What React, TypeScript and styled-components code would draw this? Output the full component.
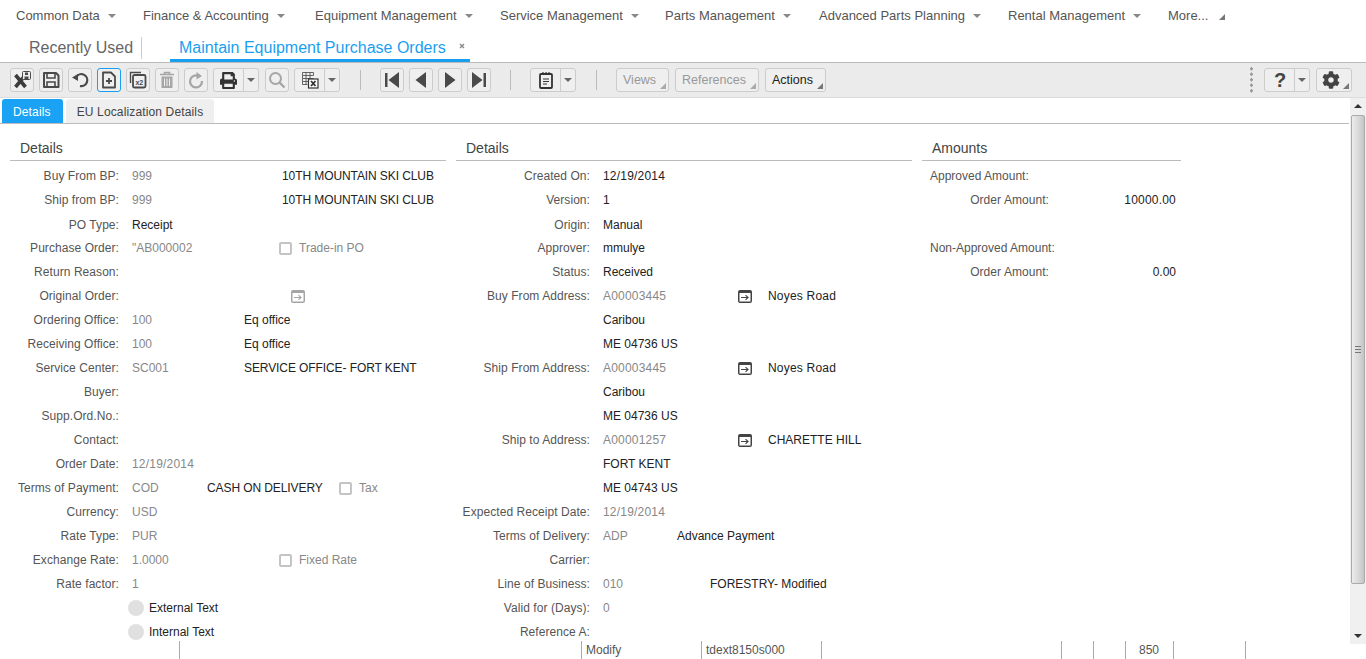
import React from "react";
import styled, { createGlobalStyle } from "styled-components";
import { FaCog, FaPrint } from "react-icons/fa";

const Global = createGlobalStyle`
  html, body { margin: 0; padding: 0; background: #fff; overflow: hidden; }
  body { font-family: "Liberation Sans", Arial, sans-serif; font-size: 12px; color: #333; }
  #root { width: 1366px; height: 659px; }
`;

const Page = styled.div`
  width: 1366px; height: 659px; display: flex; flex-direction: column; overflow: hidden;
`;
const MenuBar = styled.nav`
  height: 31px; display: flex; align-items: center; padding-left: 16px; color: #555; flex: none; font-size: 13px;
`;
const MenuItem = styled.div<{ $w: number }>`
  width: ${p => p.$w}px; display: flex; align-items: center; gap: 8px; white-space: nowrap; flex: none;
`;
const Caret = styled.span`
  width: 0; height: 0; border-left: 4px solid transparent; border-right: 4px solid transparent;
  border-top: 4px solid #888; margin-top: 1px;
`;
const CornerMark = styled.svg`
  display: block; flex: none;
`;
const MoreMark = styled(CornerMark)`
  margin: 2px 0 0 3px;
`;
const TabStrip = styled.div`
  height: 31px; display: flex; padding-left: 29px; flex: none;
`;
const Recent = styled.div`
  width: 112px; height: 22px; margin-top: 6px; border-right: 1px solid #ccc;
  font-size: 16px; line-height: 21px; color: #666;
`;
const OpenTab = styled.div`
  margin-left: 28px; width: 300px; height: 31px; box-sizing: border-box; border-bottom: 3px solid #1a9ff0;
  padding: 7px 0 0 9px; font-size: 16px; line-height: 19px; color: #1a9ff0; display: flex; gap: 13px; white-space: nowrap;
`;
const CloseMark = styled.svg`
  margin-top: 5px; flex: none;
`;
const Toolbar = styled.div`
  height: 36px; box-sizing: border-box; background: #ebebeb; border-top: 1px solid #bbb; border-bottom: 1px solid #ddd;
  display: flex; align-items: center; padding: 0 14px 0 10px; flex: none;
`;
const Btn = styled.div<{ $focus?: boolean; $gap?: number }>`
  width: 24px; height: 24px; box-sizing: border-box; flex: none; margin-left: ${p => p.$gap ?? 5}px;
  border: 1px solid ${p => (p.$focus ? "#1a9ff0" : "#ccc")}; border-radius: 3px;
  display: flex; align-items: center; justify-content: center; background: #efefef;
  &:first-child { margin-left: 0; }
`;
const Split = styled.div<{ $gap?: number }>`
  height: 24px; box-sizing: border-box; flex: none; margin-left: ${p => p.$gap ?? 5}px;
  border: 1px solid #ccc; border-radius: 3px; display: grid; grid-template-columns: 30px 14px; background: #efefef;
`;
const SplitMain = styled.div`
  display: flex; align-items: center; justify-content: center; border-right: 1px solid #ccc;
`;
const SplitDrop = styled.div`
  display: flex; align-items: center; justify-content: center;
`;
const SmallCaret = styled.span`
  width: 0; height: 0; border-left: 4px solid transparent; border-right: 4px solid transparent; border-top: 4px solid #666;
`;
const Sep = styled.div<{ $l: number; $r: number }>`
  width: 1px; height: 20px; background: #bbb; flex: none; margin: 0 ${p => p.$r}px 0 ${p => p.$l}px;
`;
const TextBtn = styled.div<{ $w: number; $off?: boolean; $gap?: number }>`
  width: ${p => p.$w}px; height: 24px; box-sizing: border-box; margin-left: ${p => p.$gap ?? 6}px; flex: none; position: relative;
  border: 1px solid #ccc; border-radius: 3px; background: #efefef; padding-left: 6px; line-height: 23px; font-size: 12.5px;
  color: ${p => (p.$off ? "#999" : "#222")};
`;
const GearBtn = styled.div`
  width: 36px; height: 24px; box-sizing: border-box; margin-left: 6px; flex: none; position: relative;
  border: 1px solid #ccc; border-radius: 3px; background: #efefef; padding: 2px 0 0 5px;
`;
const BtnCorner = styled(CornerMark)`
  position: absolute; right: 2px; bottom: 2px;
`;
const Grip = styled.div`
  margin-left: auto; margin-right: 11px; width: 3px; height: 28px; flex: none;
  background-image: radial-gradient(circle, #999 1.4px, transparent 1.6px); background-size: 3px 5.5px;
`;
const Body = styled.div`
  height: 542px; display: grid; grid-template-columns: 1350px 16px; flex: none;
`;
const Main = styled.div`
  min-width: 0; display: flex; flex-direction: column;
`;
const TabsRow = styled.div`
  height: 26px; margin-right: 1px; display: flex; box-sizing: border-box; border-bottom: 1px solid #bbb; padding-left: 2px; gap: 3px; flex: none;
`;
const SubTab = styled.div<{ $on?: boolean }>`
  height: 24px; margin-top: 1px; box-sizing: border-box; padding: 0 ${p => (p.$on ? 12 : 11)}px 0 11px; line-height: 26px; border-radius: 3px 3px 0 0; letter-spacing: .14px;
  background: ${p => (p.$on ? "#1aa3f5" : "#efefef")}; color: ${p => (p.$on ? "#fff" : "#444")};
`;
const Form = styled.div`
  flex: 1; overflow: hidden; display: flex; padding: 13px 0 0 10px; box-sizing: border-box; align-items: flex-start;
`;
const Section = styled.section<{ $w: number; $gap?: number }>`
  width: ${p => p.$w}px; flex: none; margin-left: ${p => p.$gap ?? 0}px;
`;
const SectionTitle = styled.h3`
  margin: 0 0 3px; height: 24px; box-sizing: border-box; border-bottom: 1px solid #bbb; padding-left: 10px;
  font-size: 14px; font-weight: 400; line-height: 22px; color: #444;
`;
const Row = styled.div<{ $nudge?: boolean }>`
  height: 24px; box-sizing: border-box; padding-top: ${p => (p.$nudge ? 2 : 0)}px; display: flex; align-items: center; white-space: nowrap;
`;
const Label = styled.div<{ $w: number }>`
  width: ${p => p.$w}px; text-align: right; color: #555; flex: none; margin-right: 13px; letter-spacing: .06px; white-space: nowrap;
`;
const Muted = styled.div<{ $w?: number; $wide?: boolean }>`
  width: ${p => (p.$w ? `${p.$w}px` : "auto")}; color: #888; flex: none;
  letter-spacing: ${p => (p.$wide ? ".2px" : "0")};
`;
const Val = styled.div<{ $w?: number; $tight?: boolean; $wide?: boolean; $after?: number }>`
  width: ${p => (p.$w ? `${p.$w}px` : "auto")}; color: #222; flex: none;
  margin-left: ${p => p.$after ?? 0}px;
  letter-spacing: ${p => (p.$tight ? "-.09px" : p.$wide ? ".2px" : "0")};
`;
const Check = styled.span`
  width: 13px; height: 13px; box-sizing: border-box; border: 2px solid #c4c4c4; border-radius: 2px; margin-right: 7px; flex: none;
`;
const Hint = styled.span`
  color: #888;
`;
const AmountHead = styled.div`
  height: 24px; line-height: 24px; padding-left: 8px; color: #555;
`;
const AmountRow = styled.div`
  height: 24px; display: flex; justify-content: space-between; align-items: center; padding: 0 5px 0 46px;
`;
const Dot = styled.span`
  width: 16px; height: 16px; border-radius: 50%; background: #e0e0e0; margin: 0 5px 0 118px; flex: none;
`;
const Scroll = styled.div`
  background: #f0f0f0; display: flex; flex-direction: column; align-items: center;
`;
const ArrowUp = styled.span`
  width: 0; height: 0; border-left: 4px solid transparent; border-right: 4px solid transparent; border-bottom: 4px solid #333; margin: 6px 0 7px;
`;
const ArrowDown = styled.span`
  width: 0; height: 0; border-left: 4px solid transparent; border-right: 4px solid transparent; border-top: 4px solid #333; margin: auto 0 6px;
`;
const Thumb = styled.div`
  width: 14px; height: 469px; box-sizing: border-box; border: 1px solid #aaa; border-radius: 2px; flex: none;
  background: linear-gradient(90deg, #ececec, #d6d6d6 60%, #c4c4c4); display: flex; align-items: center; justify-content: center;
`;
const ThumbGrip = styled.span`
  width: 6px; height: 5px; border-top: 1px solid #777; border-bottom: 1px solid #777; position: relative;
  &::after { content: ""; position: absolute; left: 0; right: 0; top: 2px; height: 1px; background: #777; }
`;
const Status = styled.footer`
  height: 18px; margin-top: 1px; display: flex; flex: none; padding-left: 179px; color: #555; line-height: 18px;
`;
const Cell = styled.div<{ $w: number; $pad?: number }>`
  width: ${p => p.$w}px; box-sizing: border-box; border-left: 1px solid #aaa; padding-left: ${p => p.$pad ?? 4}px; flex: none; white-space: nowrap;
`;
const HelpSvg = styled.svg`
  overflow: visible;
`;

const D = "#4a4a4a";
const Off = "#a6a6a6";

const ico = { width: 18, height: 18, viewBox: "0 0 18 18" };

const IconSaveExit = () => (
  <svg {...ico}>
    <path d="M2.5 4l10 12M12.5 4l-10 12" stroke="#3c3c3c" strokeWidth="3.6" fill="none" />
    <rect x="9.5" y="0.5" width="8" height="8" rx="1" fill="#efefef" stroke={D} />
    <rect x="12" y="1.5" width="3" height="2.5" fill={D} />
    <rect x="11.5" y="5.5" width="4" height="3" fill={D} />
  </svg>
);
const IconSave = () => (
  <svg {...ico}>
    <path d="M2 2h12l2.5 2.5V16H2z" fill="none" stroke={D} strokeWidth="2" strokeLinejoin="round" />
    <path d="M5 2v5h8V2M5 16v-5h8v5" fill="none" stroke={D} strokeWidth="1.6" />
  </svg>
);
const IconUndo = () => (
  <svg {...ico}>
    <path d="M5.5 5.5A6 6 0 1 1 9 15" fill="none" stroke={D} strokeWidth="2.2" />
    <path d="M1 6.5L7 3v7z" fill={D} />
  </svg>
);
const IconNew = () => (
  <svg {...ico}>
    <path d="M3 1.5h8l4 4v11H3z" fill="none" stroke={D} strokeWidth="1.8" strokeLinejoin="round" />
    <path d="M6 10h6M9 7v6" stroke={D} strokeWidth="1.8" />
  </svg>
);
const IconDup = () => (
  <svg {...ico}>
    <path d="M1.5 12V1.5H12" fill="none" stroke={D} strokeWidth="1.4" />
    <rect x="4" y="4" width="12.5" height="12.5" rx="1.5" fill="#efefef" stroke={D} strokeWidth="1.8" />
    <text x="6.4" y="14" fontSize="7" fontWeight="700" fontFamily="Liberation Sans" fill={D}>x2</text>
  </svg>
);
const IconTrash = () => (
  <svg {...ico}>
    <path d="M2 3.5h14M6.5 3.5V1.5h5v2" fill="none" stroke={Off} strokeWidth="1.6" />
    <path d="M3.5 5.5h11V17h-11z" fill={Off} />
    <path d="M6.5 7.5v7.5M9 7.5v7.5M11.5 7.5v7.5" stroke="#efefef" strokeWidth="1" />
  </svg>
);
const IconRedo = () => (
  <svg {...ico}>
    <path d="M11.5 5A6 6 0 1 0 15 10" fill="none" stroke={Off} strokeWidth="2.2" />
    <path d="M9.5 1v7.5L15 5z" fill={Off} />
  </svg>
);
const IconSearch = () => (
  <svg {...ico}>
    <circle cx="7.5" cy="7.5" r="5.5" fill="none" stroke={Off} strokeWidth="2" />
    <path d="M11.5 11.5l5 5" stroke={Off} strokeWidth="2.4" />
  </svg>
);
const IconExcel = () => (
  <svg {...ico}>
    <path d="M1.5 1.5h11v3h-11zM1.5 4.5v3h11M1.5 7.5v3h6M1.5 10.5v3h5M5 1.5v12M9 1.5v6" fill="none" stroke="#555" strokeWidth=".9" />
    <rect x="7.5" y="8" width="9.5" height="9" fill="#fff" stroke="#333" strokeWidth="1.2" />
    <path d="M10 10l4.5 5M14.5 10L10 15" stroke="#333" strokeWidth="1.8" />
  </svg>
);
const IconFirst = () => (
  <svg {...ico}><path d="M2 2h2.5v14H2zM16 1v16L5.5 9z" fill={D} /></svg>
);
const IconPrev = () => (
  <svg {...ico}><path d="M14 1v16L3.5 9z" fill={D} /></svg>
);
const IconNext = () => (
  <svg {...ico}><path d="M4 1v16L14.5 9z" fill={D} /></svg>
);
const IconLast = () => (
  <svg {...ico}><path d="M13.5 2H16v14h-2.5zM2 1v16L12.5 9z" fill={D} /></svg>
);
const IconNote = () => (
  <svg {...ico}>
    <rect x="3" y="3" width="12" height="14" rx="1" fill="none" stroke="#333" strokeWidth="1.8" />
    <path d="M6 1v3M9 1v3M12 1v3M6 8h6M6 10.5h6M6 13h4" stroke="#333" strokeWidth="1.2" />
  </svg>
);
const IconHelp = () => (
  <HelpSvg width="16" height="20" viewBox="0 0 16 20">
    <text x="8" y="17" textAnchor="middle" fontSize="20" fontWeight="700" fontFamily="Liberation Sans" fill="#444">?</text>
  </HelpSvg>
);
const Corner = ({ c = "#777" }: { c?: string }) => (
  <BtnCorner width="6" height="6" viewBox="0 0 6 6"><path d="M6 0v6H0z" fill={c} /></BtnCorner>
);
const Jump = ({ c = "#444", bar = "#fff" }: { c?: string; bar?: string }) => (
  <svg width="14" height="13" viewBox="0 0 14 13">
    <rect width="14" height="13" rx="2" fill={c} />
    <rect x="1.5" y="3" width="11" height="8.5" fill={bar} />
    <path d="M3 7.5h6.5M7.5 5.2l2.6 2.3-2.6 2.3" fill="none" stroke={c} strokeWidth="1.1" />
  </svg>
);
const JumpSlot = styled.span<{ $m: number }>`
  display: flex; margin-left: ${p => p.$m}px; flex: none;
`;

const menu: [string, number][] = [
  ["Common Data", 127], ["Finance & Accounting", 172], ["Equipment Management", 185],
  ["Service Management", 165], ["Parts Management", 154], ["Advanced Parts Planning", 189], ["Rental Management", 160],
];

const L1 = 109;
const L2 = 134;

function App() {
  return (
    <Page>
      <Global />
      <MenuBar>
        {menu.map(([t, w]) => (
          <MenuItem key={t} $w={w}>{t}<Caret /></MenuItem>
        ))}
        <MenuItem $w={70}>
          More...
          <MoreMark width="6" height="6" viewBox="0 0 6 6"><path d="M6 0v6H0z" fill="#777" /></MoreMark>
        </MenuItem>
      </MenuBar>
      <TabStrip>
        <Recent>Recently Used</Recent>
        <OpenTab>
          Maintain Equipment Purchase Orders
          <CloseMark width="6" height="6" viewBox="0 0 6 6"><path d="M1 1l4 4M5 1L1 5" stroke="#888" strokeWidth="1.4" /></CloseMark>
        </OpenTab>
      </TabStrip>
      <Toolbar>
        <Btn><IconSaveExit /></Btn>
        <Btn><IconSave /></Btn>
        <Btn><IconUndo /></Btn>
        <Btn $focus><IconNew /></Btn>
        <Btn><IconDup /></Btn>
        <Btn><IconTrash /></Btn>
        <Btn><IconRedo /></Btn>
        <Split><SplitMain><FaPrint size={17} color="#333" /></SplitMain><SplitDrop><SmallCaret /></SplitDrop></Split>
        <Btn $gap={6}><IconSearch /></Btn>
        <Split><SplitMain><IconExcel /></SplitMain><SplitDrop><SmallCaret /></SplitDrop></Split>
        <Sep $l={20} $r={19} />
        <Btn $gap={0}><IconFirst /></Btn>
        <Btn><IconPrev /></Btn>
        <Btn><IconNext /></Btn>
        <Btn><IconLast /></Btn>
        <Sep $l={19} $r={19} />
        <Split $gap={0}><SplitMain><IconNote /></SplitMain><SplitDrop><SmallCaret /></SplitDrop></Split>
        <Sep $l={20} $r={19} />
        <TextBtn $w={53} $off $gap={0}>Views<Corner c="#aaa" /></TextBtn>
        <TextBtn $w={84} $off>References<Corner c="#aaa" /></TextBtn>
        <TextBtn $w={61}>Actions<Corner /></TextBtn>
        <Grip />
        <Split $gap={0}><SplitMain><IconHelp /></SplitMain><SplitDrop><SmallCaret /></SplitDrop></Split>
        <GearBtn><FaCog size={18} color="#444" /><Corner /></GearBtn>
      </Toolbar>
      <Body>
        <Main>
          <TabsRow>
            <SubTab $on>Details</SubTab>
            <SubTab>EU Localization Details</SubTab>
          </TabsRow>
          <Form>
            <Section $w={436}>
              <SectionTitle>Details</SectionTitle>
              <Row><Label $w={L1}>Buy From BP:</Label><Muted $w={150}>999</Muted><Val $tight>10TH MOUNTAIN SKI CLUB</Val></Row>
              <Row><Label $w={L1}>Ship from BP:</Label><Muted $w={150}>999</Muted><Val $tight>10TH MOUNTAIN SKI CLUB</Val></Row>
              <Row $nudge><Label $w={L1}>PO Type:</Label><Val>Receipt</Val></Row>
              <Row><Label $w={L1}>Purchase Order:</Label><Muted $w={147}>"AB000002</Muted><Check /><Hint>Trade-in PO</Hint></Row>
              <Row><Label $w={L1}>Return Reason:</Label></Row>
              <Row><Label $w={L1}>Original Order:</Label><JumpSlot $m={159}><Jump c="#a5a5a5" /></JumpSlot></Row>
              <Row><Label $w={L1}>Ordering Office:</Label><Muted $w={112}>100</Muted><Val>Eq office</Val></Row>
              <Row><Label $w={L1}>Receiving Office:</Label><Muted $w={112}>100</Muted><Val>Eq office</Val></Row>
              <Row><Label $w={L1}>Service Center:</Label><Muted $w={112}>SC001</Muted><Val $tight>SERVICE OFFICE- FORT KENT</Val></Row>
              <Row><Label $w={L1}>Buyer:</Label></Row>
              <Row><Label $w={L1}>Supp.Ord.No.:</Label></Row>
              <Row><Label $w={L1}>Contact:</Label></Row>
              <Row><Label $w={L1}>Order Date:</Label><Muted $wide>12/19/2014</Muted></Row>
              <Row><Label $w={L1}>Terms of Payment:</Label><Muted $w={75}>COD</Muted><Val $w={132} $tight>CASH ON DELIVERY</Val><Check /><Hint>Tax</Hint></Row>
              <Row><Label $w={L1}>Currency:</Label><Muted>USD</Muted></Row>
              <Row><Label $w={L1}>Rate Type:</Label><Muted>PUR</Muted></Row>
              <Row><Label $w={L1}>Exchange Rate:</Label><Muted $w={147}>1.0000</Muted><Check /><Hint>Fixed Rate</Hint></Row>
              <Row><Label $w={L1}>Rate factor:</Label><Muted>1</Muted></Row>
              <Row><Dot /><Val>External Text</Val></Row>
              <Row><Dot /><Val>Internal Text</Val></Row>
            </Section>
            <Section $w={456} $gap={10}>
              <SectionTitle>Details</SectionTitle>
              <Row><Label $w={L2}>Created On:</Label><Val $wide>12/19/2014</Val></Row>
              <Row><Label $w={L2}>Version:</Label><Val>1</Val></Row>
              <Row $nudge><Label $w={L2}>Origin:</Label><Val>Manual</Val></Row>
              <Row><Label $w={L2}>Approver:</Label><Val>mmulye</Val></Row>
              <Row><Label $w={L2}>Status:</Label><Val>Received</Val></Row>
              <Row><Label $w={L2}>Buy From Address:</Label><Muted $w={135} $wide>A00003445</Muted><Jump /><Val $after={16} $wide>Noyes Road</Val></Row>
              <Row><Label $w={L2} /><Val>Caribou</Val></Row>
              <Row><Label $w={L2} /><Val>ME 04736 US</Val></Row>
              <Row><Label $w={L2}>Ship From Address:</Label><Muted $w={135} $wide>A00003445</Muted><Jump /><Val $after={16} $wide>Noyes Road</Val></Row>
              <Row><Label $w={L2} /><Val>Caribou</Val></Row>
              <Row><Label $w={L2} /><Val>ME 04736 US</Val></Row>
              <Row><Label $w={L2}>Ship to Address:</Label><Muted $w={135} $wide>A00001257</Muted><Jump /><Val $after={16}>CHARETTE HILL</Val></Row>
              <Row><Label $w={L2} /><Val>FORT KENT</Val></Row>
              <Row><Label $w={L2} /><Val>ME 04743 US</Val></Row>
              <Row><Label $w={L2}>Expected Receipt Date:</Label><Muted $wide>12/19/2014</Muted></Row>
              <Row><Label $w={L2}>Terms of Delivery:</Label><Muted $w={74}>ADP</Muted><Val>Advance Payment</Val></Row>
              <Row><Label $w={L2}>Carrier:</Label></Row>
              <Row><Label $w={L2}>Line of Business:</Label><Muted $w={107}>010</Muted><Val>FORESTRY- Modified</Val></Row>
              <Row><Label $w={L2}>Valid for (Days):</Label><Muted>0</Muted></Row>
              <Row><Label $w={L2}>Reference A:</Label></Row>
            </Section>
            <Section $w={259} $gap={10}>
              <SectionTitle>Amounts</SectionTitle>
              <AmountHead>Approved Amount:</AmountHead>
              <AmountRow><Label $w={81}>Order Amount:</Label><Val $wide>10000.00</Val></AmountRow>
              <AmountHead />
              <AmountHead>Non-Approved Amount:</AmountHead>
              <AmountRow><Label $w={81}>Order Amount:</Label><Val>0.00</Val></AmountRow>
            </Section>
          </Form>
        </Main>
        <Scroll>
          <ArrowUp />
          <Thumb><ThumbGrip /></Thumb>
          <ArrowDown />
        </Scroll>
      </Body>
      <Status>
        <Cell $w={402} />
        <Cell $w={120}>Modify</Cell>
        <Cell $w={120}>tdext8150s000</Cell>
        <Cell $w={240} />
        <Cell $w={32} />
        <Cell $w={32} />
        <Cell $w={48} $pad={13}>850</Cell>
        <Cell $w={72} />
        <Cell $w={10} />
      </Status>
    </Page>
  );
}

export default App;
